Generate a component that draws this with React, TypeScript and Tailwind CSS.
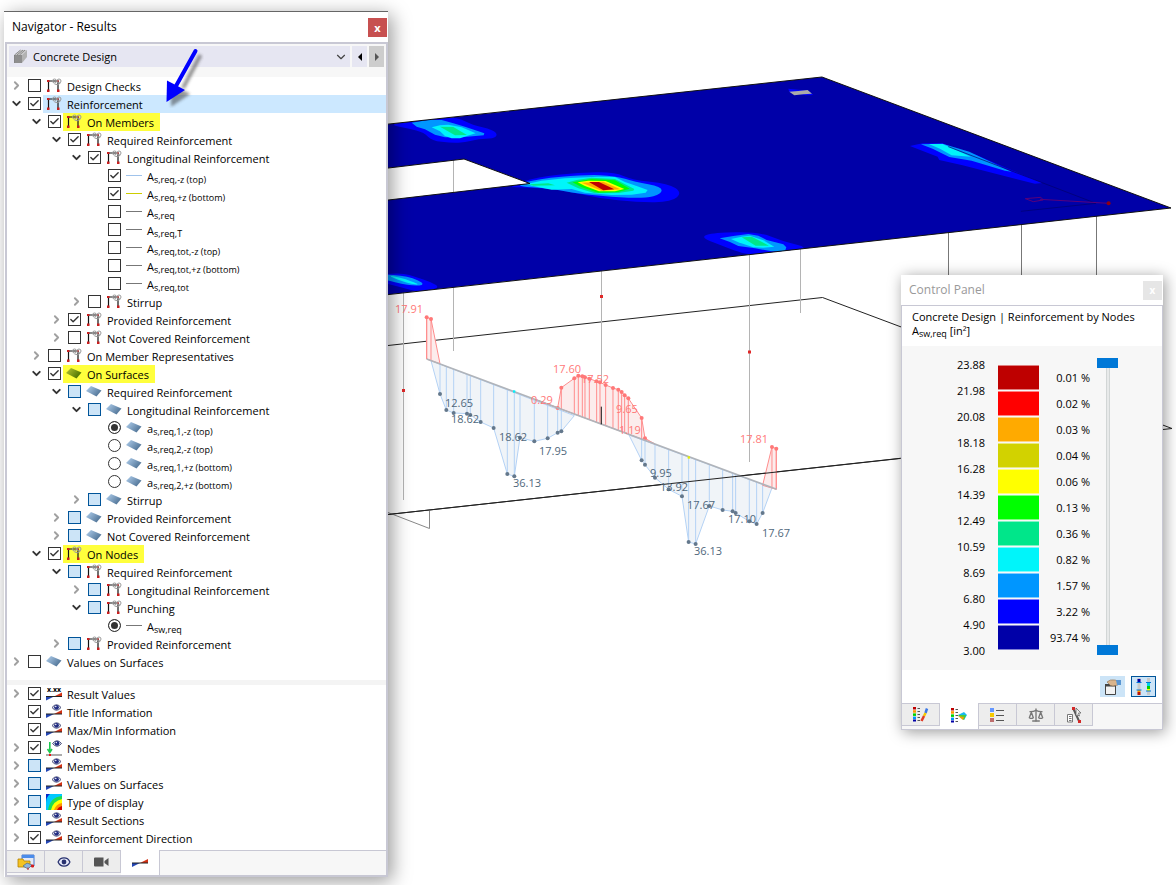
import React from 'react';
import { Check, ChevronDown, ChevronRight, Eye, Scale } from 'lucide-react';
import clsx from 'clsx';

type IconName = 'frame' | 'surface' | 'surfaceGreen' | 'line' | 'lineBlue' | 'lineYellow' | 'values' | 'result' | 'node' | 'contour';

type Row = {
  level: number;
  text: string;
  sub?: string;
  icon: IconName;
  open?: boolean;
  leaf?: boolean;
  state?: 'on' | 'off' | 'partial';
  radio?: string;
  mark?: 'selected' | 'yellow';
};

const resultRows: Row[] = [
  { level: 0, text: 'Design Checks', icon: 'frame', state: 'off' },
  { level: 0, text: 'Reinforcement', icon: 'frame', state: 'on', open: true, mark: 'selected' },
  { level: 1, text: 'On Members', icon: 'frame', state: 'on', open: true, mark: 'yellow' },
  { level: 2, text: 'Required Reinforcement', icon: 'frame', state: 'on', open: true },
  { level: 3, text: 'Longitudinal Reinforcement', icon: 'frame', state: 'on', open: true },
  { level: 4, text: 'A', sub: 's,req,-z (top)', icon: 'lineBlue', state: 'on', leaf: true },
  { level: 4, text: 'A', sub: 's,req,+z (bottom)', icon: 'lineYellow', state: 'on', leaf: true },
  { level: 4, text: 'A', sub: 's,req', icon: 'line', state: 'off', leaf: true },
  { level: 4, text: 'A', sub: 's,req,T', icon: 'line', state: 'off', leaf: true },
  { level: 4, text: 'A', sub: 's,req,tot,-z (top)', icon: 'line', state: 'off', leaf: true },
  { level: 4, text: 'A', sub: 's,req,tot,+z (bottom)', icon: 'line', state: 'off', leaf: true },
  { level: 4, text: 'A', sub: 's,req,tot', icon: 'line', state: 'off', leaf: true },
  { level: 3, text: 'Stirrup', icon: 'frame', state: 'off' },
  { level: 2, text: 'Provided Reinforcement', icon: 'frame', state: 'on' },
  { level: 2, text: 'Not Covered Reinforcement', icon: 'frame', state: 'off' },
  { level: 1, text: 'On Member Representatives', icon: 'frame', state: 'off' },
  { level: 1, text: 'On Surfaces', icon: 'surfaceGreen', state: 'on', open: true, mark: 'yellow' },
  { level: 2, text: 'Required Reinforcement', icon: 'surface', state: 'partial', open: true },
  { level: 3, text: 'Longitudinal Reinforcement', icon: 'surface', state: 'partial', open: true },
  { level: 4, text: 'a', sub: 's,req,1,-z (top)', icon: 'surface', radio: 'surface', state: 'on', leaf: true },
  { level: 4, text: 'a', sub: 's,req,2,-z (top)', icon: 'surface', radio: 'surface', leaf: true },
  { level: 4, text: 'a', sub: 's,req,1,+z (bottom)', icon: 'surface', radio: 'surface', leaf: true },
  { level: 4, text: 'a', sub: 's,req,2,+z (bottom)', icon: 'surface', radio: 'surface', leaf: true },
  { level: 3, text: 'Stirrup', icon: 'surface', state: 'partial' },
  { level: 2, text: 'Provided Reinforcement', icon: 'surface', state: 'partial' },
  { level: 2, text: 'Not Covered Reinforcement', icon: 'surface', state: 'partial' },
  { level: 1, text: 'On Nodes', icon: 'frame', state: 'on', open: true, mark: 'yellow' },
  { level: 2, text: 'Required Reinforcement', icon: 'frame', state: 'partial', open: true },
  { level: 3, text: 'Longitudinal Reinforcement', icon: 'frame', state: 'partial' },
  { level: 3, text: 'Punching', icon: 'frame', state: 'partial', open: true },
  { level: 4, text: 'A', sub: 'sw,req', icon: 'line', radio: 'node', state: 'on', leaf: true },
  { level: 2, text: 'Provided Reinforcement', icon: 'frame', state: 'partial' },
  { level: 0, text: 'Values on Surfaces', icon: 'surface', state: 'off' },
];

const displayRows: Row[] = [
  { level: 0, text: 'Result Values', icon: 'values', state: 'on' },
  { level: 0, text: 'Title Information', icon: 'result', state: 'on', leaf: true },
  { level: 0, text: 'Max/Min Information', icon: 'result', state: 'on', leaf: true },
  { level: 0, text: 'Nodes', icon: 'node', state: 'on' },
  { level: 0, text: 'Members', icon: 'result', state: 'partial' },
  { level: 0, text: 'Values on Surfaces', icon: 'result', state: 'partial' },
  { level: 0, text: 'Type of display', icon: 'contour', state: 'partial' },
  { level: 0, text: 'Result Sections', icon: 'result', state: 'partial' },
  { level: 0, text: 'Reinforcement Direction', icon: 'result', state: 'on' },
];

const indents = ['pl-0.5', 'pl-[22px]', 'pl-[42px]', 'pl-[62px]', 'pl-[82px]'];

const scaleValues = ['23.88', '21.98', '20.08', '18.18', '16.28', '14.39', '12.49', '10.59', '8.69', '6.80', '4.90', '3.00'];

const bands = [
  { color: 'bg-[#be0000]', share: '0.01 %' },
  { color: 'bg-[#ff0000]', share: '0.02 %' },
  { color: 'bg-[#ffaa00]', share: '0.03 %' },
  { color: 'bg-[#d2d200]', share: '0.04 %' },
  { color: 'bg-[#ffff00]', share: '0.06 %' },
  { color: 'bg-[#00ff00]', share: '0.13 %' },
  { color: 'bg-[#00e68a]', share: '0.36 %' },
  { color: 'bg-[#00f5fa]', share: '0.82 %' },
  { color: 'bg-[#0096ff]', share: '1.57 %' },
  { color: 'bg-[#0000ff]', share: '3.22 %' },
  { color: 'bg-[#0000a8]', share: '93.74 %' },
];

function EyeShape({ x, y }: { x: number; y: number }) {
  return (
    <g transform={`translate(${x} ${y})`}>
      <path d="M0 3.500Q4.500-2 9 3.500Q4.500 9 0 3.500Z" fill="#dfe3f4" stroke="#4b5078" strokeWidth="1" />
      <circle cx="4.500" cy="3.300" r="2.400" fill="#232d82" />
      <circle cx="3.800" cy="2.500" r=".7" fill="#fff" />
    </g>
  );
}

function Wedges({ y }: { y: number }) {
  return (
    <g>
      <path d={`M0 ${y}H8L0 ${y + 4}Z`} fill="#2346b4" />
      <path d={`M8 ${y}L16 ${y - 4}V${y}Z`} fill="#d23214" />
      <path d={`M0 ${y}H16`} stroke="#222" strokeWidth="1" />
    </g>
  );
}

function TreeIcon({ name }: { name: IconName }) {
  return (
    <svg viewBox="0 0 16 16" className="mt-px size-4 shrink-0 overflow-visible" aria-hidden="true">
      {name === 'frame' && (
        <g>
          <path d="M2.500 13V3H12V13" fill="none" stroke="#111" strokeWidth="1.200" />
          <path d="M1 2h2.500v2h-2.500zM1 11.500h2.500v2.500h-2.500zM10.500 2h2v2h-2zM11 11.500h2.500v2.500h-2.500z" fill="#c81e1e" />
          <g fill="none" stroke="#9b9b9b" strokeWidth="1">
            <circle cx="8.500" cy="3" r="2" />
            <circle cx="13" cy="3" r="2" />
            <path d="M8.500 6Q12 8 14.500 5" />
          </g>
        </g>
      )}
      {(name === 'surface' || name === 'surfaceGreen') && (
        <g>
          <linearGradient id={`${name}-fill`} x1="0" y1="0" x2="1" y2="0.600">
            <stop offset="0" stopColor={name === 'surface' ? '#b4d2f0' : '#b9c832'} />
            <stop offset="1" stopColor={name === 'surface' ? '#4f7396' : '#4b7300'} />
          </linearGradient>
          <path d="M0 7L5 2L15.500 6.500L10.500 12.500Z" fill={`url(#${name}-fill)`} />
        </g>
      )}
      {name === 'line' && <path d="M0 7.500H16" stroke="#777" />}
      {name === 'lineBlue' && <path d="M0 7.500H16" stroke="#a0c3eb" />}
      {name === 'lineYellow' && <path d="M0 7.500H16" stroke="#cdcd00" />}
      {name === 'values' && (
        <g>
          <text x="8" y="6" textAnchor="middle" className="text-[7px] font-bold">
            x.xx
          </text>
          <Wedges y={10.5} />
        </g>
      )}
      {name === 'result' && (
        <g>
          <Wedges y={10} />
          <EyeShape x={6} y={0} />
        </g>
      )}
      {name === 'node' && (
        <g>
          <path d="M3.800 2V12M1.500 9L3.800 12.500L6 9" stroke="#1ec850" strokeWidth="1.600" fill="none" />
          <path d="M0 15H16" stroke="#888" strokeWidth="1.400" />
          <rect x="3" y="14" width="2" height="2" fill="#e11" />
          <EyeShape x={6.5} y={0} />
        </g>
      )}
      {name === 'contour' && (
        <g>
          <path d="M0 0h16v16h-16z" fill="#0a28c8" />
          <path d="M16 0H4Q0 3 0 9V16H16Z" fill="#00c8ff" />
          <path d="M16 2Q4 3 2 16H16Z" fill="#1edc50" />
          <path d="M16 5Q7 7 5 16H16Z" fill="#ffff00" />
          <path d="M16 9Q10 10 8 16H16Z" fill="#ff9600" />
          <path d="M16 12Q12 13 11 16H16Z" fill="#d20000" />
        </g>
      )}
    </svg>
  );
}

function TreeRow({ row, id }: { row: Row; id: string }) {
  return (
    <li className={clsx('flex h-[18px]', indents[row.level])}>
      <span className="flex w-[15px] shrink-0 justify-center pt-0.5">
        {!row.leaf && (
          <button type="button" aria-label={`Toggle ${row.text}`} className="h-[13px]">
            {row.open ? (
              <ChevronDown className="size-[13px] text-[#333]" strokeWidth={3.5} />
            ) : (
              <ChevronRight className="size-[13px] text-[#a0a0a0]" strokeWidth={3.5} />
            )}
          </button>
        )}
      </span>
      <span className="mt-0.5 ml-1 grid size-[13px] shrink-0">
        {row.radio ? (
          <input
            id={id}
            type="radio"
            name={row.radio}
            defaultChecked={row.state === 'on'}
            className="size-[13px] appearance-none rounded-full border border-[#333] bg-white checked:bg-[#333] checked:inset-ring-2 checked:inset-ring-white"
          />
        ) : (
          <>
            <input
              id={id}
              type="checkbox"
              defaultChecked={row.state === 'on'}
              ref={(el) => {
                if (el) el.indeterminate = row.state === 'partial';
              }}
              className="peer size-[13px] appearance-none border border-[#333] bg-white [grid-area:1/1] indeterminate:border-[#005499] indeterminate:bg-[#cce4f7]"
            />
            <Check className="pointer-events-none hidden size-[13px] p-px text-[#333] [grid-area:1/1] peer-checked:block" strokeWidth={3} />
          </>
        )}
      </span>
      <label
        htmlFor={id}
        className={clsx(
          'ml-0.5 flex gap-[5px] pr-1.5 pl-[3px] text-[11px] leading-5 whitespace-nowrap',
          row.mark === 'selected' && 'flex-1 bg-[#cce8ff]',
          row.mark === 'yellow' && 'bg-[#ffff3c]',
        )}
      >
        <TreeIcon name={row.icon} />
        <span>
          {row.text}
          {row.sub && <sub className="text-[9px] leading-none">{row.sub}</sub>}
        </span>
      </label>
    </li>
  );
}

function Tree({ rows, name }: { rows: Row[]; name: string }) {
  return (
    <ul>
      {rows.map((row, i) => (
        <TreeRow key={i} row={row} id={`${name}-${i}`} />
      ))}
    </ul>
  );
}

function Navigator() {
  return (
    <aside className="relative z-10 mt-[11px] mb-2 ml-1 w-96 shrink-0 self-start border-t border-[#666] bg-white shadow-[4px_4px_18px_rgba(0,0,0,0.4)]">
      <header className="flex h-[30px] items-center justify-between pr-px pl-2">
        <h1 className="text-[12px]">Navigator - Results</h1>
        <button type="button" aria-label="Close navigator" className="size-[19px] bg-[#c75050] text-[11px] leading-none font-bold text-white">
          x
        </button>
      </header>
      <div className="ml-px border-2 border-[#c8c8d4]">
        <div className="flex gap-0.5 bg-[#f7f7f7] p-0.5 pb-2.5">
          <div className="grid flex-1 items-center bg-[#e6e6f2]">
            <select aria-label="Design type" className="h-[21px] w-full appearance-none pt-0.5 pl-6 text-[11px] [grid-area:1/1]">
              <option>Concrete Design</option>
            </select>
            <svg viewBox="0 0 16 16" className="pointer-events-none ml-1 size-4 [grid-area:1/1]" aria-hidden="true">
              <path d="M1.500 6L7.500 1H14L9 6Z" fill="#c9c9c9" />
              <path d="M1.500 6H9V14H1.500Z" fill="#8e8e8e" />
              <path d="M9 6L14 1V8L9 14Z" fill="#b2b2b2" />
              <path d="M1.500 14V6L7.500 1M4 6L10 1M6.500 6L12 1" fill="none" stroke="#6e6e6e" strokeWidth=".7" />
            </svg>
            <ChevronDown className="pointer-events-none mr-0.5 size-3.5 justify-self-end text-[#444] [grid-area:1/1]" strokeWidth={2} />
          </div>
          <button type="button" aria-label="Previous" className="grid w-[15px] place-items-center bg-[#e6e6f2]">
            <svg viewBox="0 0 4 8" className="h-2 w-1"><path d="M4 0V8L0 4Z" /></svg>
          </button>
          <button type="button" aria-label="Next" className="grid w-[15px] place-items-center bg-[#cdcdcd]">
            <svg viewBox="0 0 4 8" className="h-2 w-1"><path d="M0 0V8L4 4Z" fill="#555" /></svg>
          </button>
        </div>
        <Tree rows={resultRows} name="results" />
        <div className="mt-[9px] h-[5px] bg-[#f4f4f4]" />
        <Tree rows={displayRows} name="display" />
        <nav className="mt-[3px] flex h-[25px] border-t border-[#c8c8d4] bg-[#f7f7f7]">
          <button type="button" aria-label="Data" className="mb-0.5 grid w-[38px] place-items-center border-r border-b border-[#c8c8d4] bg-[#ededed]">
            <svg viewBox="0 0 18 16" className="h-4 w-[18px]">
              <path d="M5 1H17V12H5Z" fill="#e4e9f5" stroke="#4b78c8" />
              <path d="M5 1H17V4H5Z" fill="#4b8ceb" />
              <path d="M1 5H6L7 7H13V13H1Z" fill="#f5c322" stroke="#b48200" strokeWidth=".8" />
              <path d="M6 12L10 9L15 11L11 15Z" fill="#8cb4dc" stroke="#3c5a82" strokeWidth=".6" />
              <path d="M11 13.500v2.500M14.500 11h2v2h-2z" stroke="#d21e1e" fill="#d21e1e" />
            </svg>
          </button>
          <button type="button" aria-label="Display" className="mb-0.5 grid w-[38px] place-items-center border-r border-b border-[#c8c8d4] bg-[#ededed]">
            <Eye className="size-3.5 fill-[#e4e7f8] text-[#27306e] [&_circle]:fill-[#27306e]" strokeWidth={2.2} />
          </button>
          <button type="button" aria-label="Views" className="mb-0.5 grid w-[38px] place-items-center border-r border-b border-[#c8c8d4] bg-[#ededed]">
            <svg viewBox="0 0 16 10" className="h-2.5 w-4"><path d="M1 .5H9.500V9.500H1Q0 9.500 0 8.500V1.500Q0 .5 1 .5ZM10.500 4L14.500 1V9L10.500 6Z" fill="#555" /></svg>
          </button>
          <button type="button" aria-label="Results" aria-current="page" className="-mt-px grid w-[39px] place-items-center border-r border-[#c8c8d4] bg-white">
            <svg viewBox="0 0 16 10" className="h-2.5 w-4"><Wedges y={5} /></svg>
          </button>
        </nav>
      </div>
      {/* pointer arrow */}
      <svg viewBox="0 0 46 64" className="pointer-events-none absolute top-8 left-[158px] h-16 w-[46px]" aria-hidden="true">
        <filter id="arrow-blur"><feGaussianBlur stdDeviation="1.500" /></filter>
        <g transform="translate(5 4)" opacity=".5" filter="url(#arrow-blur)" fill="#333" stroke="#333">
          <path d="M33.500 7L16 40" strokeWidth="4" />
          <path d="M4.500 58V37L22.500 46Z" />
        </g>
        <path d="M33.500 7L14 42" stroke="#0000ff" strokeWidth="4" strokeLinecap="round" />
        <path d="M4.500 58L5 36.500L23 46Z" fill="#0000ff" />
      </svg>
    </aside>
  );
}

const thumb =
  'pointer-events-none h-[297px] w-[21px] appearance-none bg-transparent [direction:rtl] [grid-area:1/1] [writing-mode:vertical-lr] [&::-webkit-slider-thumb]:pointer-events-auto [&::-webkit-slider-thumb]:h-2.5 [&::-webkit-slider-thumb]:w-[21px] [&::-webkit-slider-thumb]:appearance-none [&::-webkit-slider-thumb]:bg-[#0078d7]';

const panelTab = 'grid w-[38px] place-items-center border-r border-b border-[#c8c8d4] bg-[#ededed] mb-[3px]';

function ColorStack() {
  return (
    <g>
      <path d="M0 0h3v2.500h-3z" fill="#be0000" />
      <path d="M0 3.200h3v2.500h-3z" fill="#ff9600" />
      <path d="M0 6.400h3v2.500h-3z" fill="#00d200" />
      <path d="M0 9.600h3v2.500h-3z" fill="#0096ff" />
      <path d="M0 12.500h3v2h-3z" fill="#0000a8" />
      <path d="M4.500 1.500h2.500M4.500 4.500h2.500M4.500 7.500h2.500M4.500 10.500h2.500M4.500 13.500h2.500" stroke="#555" />
    </g>
  );
}

function ControlPanel() {
  return (
    <aside className="absolute top-[275px] right-[13px] w-[262px] bg-white shadow-[2px_2px_14px_rgba(0,0,0,0.4)]">
      <header className="flex h-[30px] items-center justify-between pr-px pl-2 text-[#999]">
        <h2 className="text-[12px]">Control Panel</h2>
        <button type="button" aria-label="Close panel" className="size-[19px] bg-[#e6e6e6] text-[10px] leading-none font-bold text-white">
          x
        </button>
      </header>
      <div className="border border-[#c8c8d4]">
        <div className="h-10 pt-1 pl-2.5 text-[11px] leading-[14px] whitespace-nowrap">
          <p>Concrete Design | Reinforcement by Nodes</p>
          <p>
            A<sub className="text-[9px]">sw,req</sub> [in²]
          </p>
        </div>
        <div className="flex h-[324px] bg-[#f7f7f7] pt-1.5 text-[11px] leading-[26px]">
          <ol className="w-[83px] text-right">
            {scaleValues.map((v) => (
              <li key={v}>{v}</li>
            ))}
          </ol>
          <ol className="mt-[13px] ml-[13px] flex">
            <li>
              {bands.map((b) => (
                <div key={b.share} className={clsx('mb-px h-[25px] w-[41px] border-y border-white/50', b.color)} />
              ))}
            </li>
            <li className="w-[51px] text-right">
              {bands.map((b) => (
                <div key={b.share}>{b.share}</div>
              ))}
            </li>
          </ol>
          <div className="mt-1.5 ml-[7px] grid h-[297px] justify-items-center">
            <div className="h-full w-1 border-x border-[#d2d6d6] bg-[#e8eaea] [grid-area:1/1]" />
            <input type="range" aria-label="Upper limit" min={0} max={11} defaultValue={11} className={thumb} />
            <input type="range" aria-label="Lower limit" min={0} max={11} defaultValue={0} className={thumb} />
          </div>
        </div>
        <div className="flex h-[33px] justify-end gap-1.5 pt-1.5 pr-1.5">
          <button type="button" aria-label="Edit scale" className="grid h-[21px] w-[25px] place-items-center bg-[#cce4f7]">
            <svg viewBox="0 0 18 16" className="h-4 w-[18px]">
              <path d="M1.500 6H11.500V15.500H1.500Z" fill="#f2f2f2" stroke="#444" />
              <path d="M1 5H12V7.500H1Z" fill="#444" />
              <path d="M3 3Q6 0 11 1L14 2V6L9 7Q6 7 5 5Z" fill="#d9b48c" stroke="#8c6e50" strokeWidth=".6" />
              <path d="M12 1L17 1V6L13 6Z" fill="#5a96d2" />
            </svg>
          </button>
          <button type="button" aria-label="Filter scale" className="grid h-[21px] w-[25px] place-items-center border border-[#005499] bg-[#cce4f7]">
            <svg viewBox="0 0 18 17" className="h-[17px] w-[18px]">
              <path d="M2.500 0h3v17h-3zM12 0h3v17h-3z" fill="#c8c8c8" />
              <path d="M2.500 1h3v3h-3z" fill="#0000a8" />
              <path d="M2.500 12h3v2h-3z" fill="#ff9600" />
              <path d="M2.500 14h3v3h-3z" fill="#be1400" />
              <path d="M12 4h3v4h-3z" fill="#00d2e6" />
              <path d="M12 8h3v3h-3z" fill="#00d200" />
              <path d="M12 11h3v2h-3z" fill="#ffff00" />
              <path d="M1.500 4.500h5M1.500 12h5M11 4.500h5M11 13h5" stroke="#0078d7" />
            </svg>
          </button>
        </div>
        <nav className="flex h-[26px] border-t border-[#c8c8d4] bg-[#f7f7f7]">
          <button type="button" aria-label="Color scale" className={panelTab}>
            <svg viewBox="0 0 16 16" className="size-4">
              <ColorStack />
              <path d="M14 1.500L12.500 6" stroke="#3c78e6" strokeWidth="2.500" />
              <path d="M12.500 6L11 9" stroke="#f5c800" strokeWidth="2.500" />
              <path d="M11 9L8.500 14" stroke="#e13c28" strokeWidth="2.500" />
            </svg>
          </button>
          <button type="button" aria-label="Value spectrum" aria-current="page" className="-mt-px grid w-[39px] place-items-center border-r border-[#c8c8d4] bg-white">
            <svg viewBox="0 0 16 16" className="size-4">
              <ColorStack />
              <path d="M7 7L13 4L16 7L13 12Z" fill="#19b9f0" />
              <path d="M7 7L15 7L13 12Z" fill="#46cd3c" />
              <path d="M7 8L13 9L12 12Z" fill="#f5a000" />
            </svg>
          </button>
          <button type="button" aria-label="Legend" className={panelTab}>
            <svg viewBox="0 0 16 16" className="size-4">
              <path d="M0 1h4v4h-4z" fill="#6496ff" />
              <path d="M0 6h4v4h-4z" fill="#f5c800" />
              <path d="M0 11h4v4h-4z" fill="#be6e6e" />
              <path d="M6 3.500h8M6 8.500h8M6 13.500h8" stroke="#555" />
            </svg>
          </button>
          <button type="button" aria-label="Factors" className={panelTab}>
            <Scale className="size-4 text-[#777]" strokeWidth={2} />
          </button>
          <button type="button" aria-label="Filter" className={panelTab}>
            <svg viewBox="0 0 16 16" className="size-4">
              <path d="M1.500 7.500H6.500V15H1.500ZM3 9.500h2.500M3 11.500h2.500M3 13.500h2.500" fill="#fff" stroke="#777" />
              <path d="M7.500 2L13 14" stroke="#555" strokeWidth="2" />
              <path d="M10 1L15 6H12.500L13.500 9L11.500 8L10 9Z" fill="#eee" stroke="#666" strokeWidth=".8" />
              <path d="M6 0h3v3h-3zM12 13h3v3h-3z" fill="#d22828" />
            </svg>
          </button>
        </nav>
      </div>
    </aside>
  );
}

type Point = [number, number];

// closed curve through the midpoints of the outline
function smooth(points: Point[]) {
  const mid = (a: Point, b: Point) => `${(a[0] + b[0]) / 2} ${(a[1] + b[1]) / 2}`;
  const n = points.length;
  return `M${mid(points[n - 1], points[0])}` + points.map((p, i) => `Q${p[0]} ${p[1]} ${mid(p, points[(i + 1) % n])}`).join('') + 'Z';
}

const contours: { fill: string; points: Point[]; sharp?: boolean }[] = [
  { fill: '#0000ff', points: [[10, 194], [85, 183], [200, 171], [230, 178], [260, 194], [325, 210], [338, 225], [325, 236], [280, 237], [240, 247], [200, 249], [140, 242], [118, 218], [70, 205]] },
  { fill: '#0096ff', sharp: true, points: [[80, 188], [130, 180], [170, 180], [205, 190], [240, 200], [298, 220], [296, 226], [230, 232], [180, 232], [150, 224], [120, 208], [95, 200]] },
  { fill: '#00f5fa', sharp: true, points: [[140, 202], [165, 196], [190, 194], [230, 202], [272, 220], [245, 228], [225, 235], [200, 235], [180, 228], [165, 214]] },
  { fill: '#00e68a', sharp: true, points: [[165, 200], [205, 201], [246, 225], [210, 226]] },
  { fill: '#0000ff', points: [[360, 380], [460, 350], [580, 338], [690, 336], [740, 360], [850, 370], [892, 398], [860, 426], [760, 427], [640, 415], [520, 388], [430, 383]] },
  { fill: '#0096ff', points: [[380, 378], [460, 356], [600, 344], [690, 347], [750, 366], [830, 380], [830, 402], [780, 415], [680, 411], [580, 401], [500, 386]] },
  { fill: '#00f5fa', sharp: true, points: [[425, 372], [470, 362], [540, 355], [640, 350], [690, 351], [720, 366], [755, 378], [788, 390], [782, 398], [740, 404], [680, 405], [600, 398], [560, 387], [500, 389], [440, 377]] },
  { fill: '#00e68a', sharp: true, points: [[432, 373], [490, 370], [510, 376], [445, 377]] },
  { fill: '#00e68a', sharp: true, points: [[545, 368], [575, 360], [620, 353], [690, 357], [748, 387], [745, 392], [700, 399], [630, 400], [580, 385]] },
  { fill: '#00ff00', sharp: true, points: [[563, 367], [620, 357], [690, 361], [734, 386], [700, 396], [640, 398], [590, 382]] },
  { fill: '#ffff00', sharp: true, points: [[578, 367], [610, 362], [662, 363], [718, 387], [690, 394], [642, 394], [600, 378]] },
  { fill: '#ffaa00', sharp: true, points: [[590, 368], [655, 365], [706, 388], [650, 392]] },
  { fill: '#be0000', sharp: true, points: [[612, 366], [642, 366], [688, 388], [655, 391]] },
  { fill: '#0000ff', points: [[948, 531], [985, 518], [1125, 516], [1190, 543], [1270, 562], [1225, 572], [1180, 577], [1090, 585], [1050, 572], [985, 547]] },
  { fill: '#0096ff', sharp: true, points: [[1004, 535], [1045, 528], [1090, 522], [1120, 527], [1145, 540], [1195, 553], [1204, 562], [1200, 574], [1160, 574], [1110, 565], [1060, 558], [1035, 546]] },
  { fill: '#00f5fa', sharp: true, points: [[1038, 537], [1070, 530], [1095, 527], [1135, 541], [1168, 560], [1135, 563], [1105, 562], [1060, 547]] },
  { fill: '#00e68a', sharp: true, points: [[1070, 532], [1100, 530], [1152, 557], [1112, 557]] },
  { fill: '#0000ff', points: [[-20, 645], [50, 638], [95, 652], [135, 665], [168, 684], [100, 697], [50, 682], [-20, 665]] },
  { fill: '#0096ff', points: [[-20, 642], [70, 648], [125, 674], [80, 679], [-20, 655]] },
  { fill: '#00f5fa', points: [[5, 646], [45, 652], [110, 675], [70, 671]] },
  { fill: '#0000ff', sharp: true, points: [[1575, 258], [1613, 250], [1673, 250], [1700, 262], [1773, 284], [1870, 326], [1973, 369], [1950, 371], [1873, 352], [1733, 316], [1663, 300], [1658, 290]] },
  { fill: '#0096ff', sharp: true, points: [[1608, 253], [1673, 251], [1753, 275], [1880, 335], [1860, 332], [1760, 302], [1693, 291], [1643, 266]] },
  { fill: '#00f5fa', sharp: true, points: [[1632, 252], [1673, 252], [1758, 290], [1700, 286], [1665, 266]] },
];

const blueLeft: Point[] = [[138, 212], [165, 312], [184, 360], [206, 369], [246, 371], [256, 375], [287, 396], [326, 414], [367, 552], [388, 559], [405, 443], [448, 454], [488, 445], [518, 428], [529, 424], [568, 377]];
const blueRight: Point[] = [[732, 435], [770, 511], [780, 524], [810, 563], [851, 598], [891, 619], [911, 756], [932, 762], [973, 648], [1013, 660], [1043, 664], [1052, 669], [1093, 694], [1115, 702], [1133, 669], [1161, 594]];
const redLeft: Point[] = [[125, 207], [125, 82], [138, 87], [165, 221]];
const redMid: Point[] = [[450, 328], [518, 354], [529, 293], [568, 265], [580, 257], [592, 259], [600, 262], [613, 266], [635, 274], [645, 277], [662, 285], [684, 294], [700, 299], [710, 306], [719, 316], [730, 325], [770, 384], [780, 445], [810, 462]];
const redRight: Point[] = [[1133, 586], [1161, 471], [1174, 476], [1174, 598]];

const beamY = (x: number) => 207 + (x - 125) * 0.3724;

function Diagram({ points, color, dot, fill }: { points: Point[]; color: string; dot: string; fill: string }) {
  const inner = points.slice(1, -1);
  return (
    <g>
      <polygon points={points.join(' ')} fill={fill} stroke={color} strokeWidth="3" />
      {inner.map(([x, y]) => (
        <g key={x}>
          <path d={`M${x} ${y}V${beamY(x)}`} stroke={color} strokeWidth="3" />
          <circle cx={x} cy={y} r="6" fill={dot} />
        </g>
      ))}
    </g>
  );
}

const values: { x: number; y: number; text: string; red?: boolean }[] = [
  { x: 395, y: 313, text: '17.91', red: true },
  { x: 445, y: 407, text: '12.65' },
  { x: 451, y: 423, text: '18.62' },
  { x: 499, y: 441, text: '18.62' },
  { x: 539, y: 455, text: '17.95' },
  { x: 513, y: 487, text: '36.13' },
  { x: 553, y: 373, text: '17.60', red: true },
  { x: 581, y: 383, text: '17.52', red: true },
  { x: 531, y: 404, text: '0.29', red: true },
  { x: 616, y: 413, text: '9.65', red: true },
  { x: 619, y: 434, text: '1.19', red: true },
  { x: 650, y: 477, text: '9.95' },
  { x: 660, y: 491, text: '13.92' },
  { x: 687, y: 509, text: '17.67' },
  { x: 728, y: 523, text: '17.10' },
  { x: 762, y: 537, text: '17.67' },
  { x: 694, y: 555, text: '36.13' },
  { x: 740, y: 443, text: '17.81', red: true },
];

function ModelView() {
  return (
    <svg viewBox="388 0 788 885" className="block h-auto w-full" role="img" aria-label="Reinforcement results on the model">
      <g fill="none" stroke="#222" strokeWidth="1">
        <path d="M388 345.500L822.500 297.500L1172 428.500L388 514.500" />
        <path d="M388 512.500L429.500 528.500V510.500" stroke="#888" />
      </g>
      <g stroke="#b4b4b4">
        <path d="M453.500 160V192M453.500 287V351M403.500 292V500M601.500 271V424M749.500 255V462M800.500 249V313" />
        <path d="M948.500 232V290M1021.500 224V290M1096.500 216V290" stroke="#777" />
      </g>
      <path d="M600 295h3v3h-3zM748 350.500h3v3h-3zM402 389h3v3h-3z" fill="#e02828" />
      <clipPath id="slab">
        <path d="M380 125L822 77L1171 208L380 295.500V201L530 183.500L464 159L380 169Z" />
      </clipPath>
      <g clipPath="url(#slab)">
        <path d="M388 70H1176V300H388Z" fill="#0000a8" />
        <g transform="translate(385 60) scale(0.3333)">
          {contours.map((c, i) =>
            c.sharp ? <polygon key={i} points={c.points.join(' ')} fill={c.fill} /> : <path key={i} d={smooth(c.points)} fill={c.fill} />,
          )}
          <path d="M1213 95L1210 86L1270 92L1285 105L1262 106Z" fill="#0000ff" />
          <path d="M1213 95L1240 93L1268 90L1281 101L1255 103L1228 106Z" fill="#aaa" />
          <path d="M1690 260L2133 430L1908 454" fill="none" stroke="#00006a" strokeWidth="2" />
          <path d="M1921 416L1968 412L1975 420L1945 425L1921 416M1965 418L2171 430" fill="none" stroke="#5a0078" strokeWidth="3" />
          <circle cx="2171" cy="430" r="6" fill="#8c0014" />
        </g>
      </g>
      <path d="M380 125L822 77L1171 208L380 295.500M380 201L530 183.500L464 159L380 169" fill="none" stroke="#111" />
      <g transform="translate(385 290) scale(0.3333)">
        <Diagram points={blueLeft} color="#b4d2f5" dot="#64788c" fill="#f0f4f8" />
        <Diagram points={blueRight} color="#b4d2f5" dot="#64788c" fill="#f0f4f8" />
        <Diagram points={redLeft} color="#ff8c8c" dot="#ff7878" fill="#fcecec" />
        <Diagram points={redMid} color="#ff8c8c" dot="#ff7878" fill="#fcecec" />
        <Diagram points={redRight} color="#ff8c8c" dot="#ff7878" fill="#fcecec" />
        <path d="M125 207L1175 598" stroke="#b0b4ba" strokeWidth="5" />
        <path d="M649 350V403" stroke="#111" strokeWidth="3" />
        <path d="M384 301h7v7h-7z" fill="#00f0fa" />
        <path d="M908 499h7v7h-7z" fill="#e6f000" />
      </g>
      <path d="M388 514.500L900 458.500" stroke="#222" />
      <g className="text-[11px]">
        {values.map((v, i) => (
          <text key={i} x={v.x} y={v.y} className={v.red ? 'fill-[#ff7878]' : 'fill-[#50687c]'}>
            {v.text}
          </text>
        ))}
      </g>
    </svg>
  );
}

export default function App() {
  return (
    <main className="flex min-h-screen bg-white font-['Open_Sans','Noto_Sans',sans-serif] text-black">
      <Navigator />
      <section className="relative min-w-0 flex-1 overflow-hidden">
        <ModelView />
        <ControlPanel />
      </section>
    </main>
  );
}
